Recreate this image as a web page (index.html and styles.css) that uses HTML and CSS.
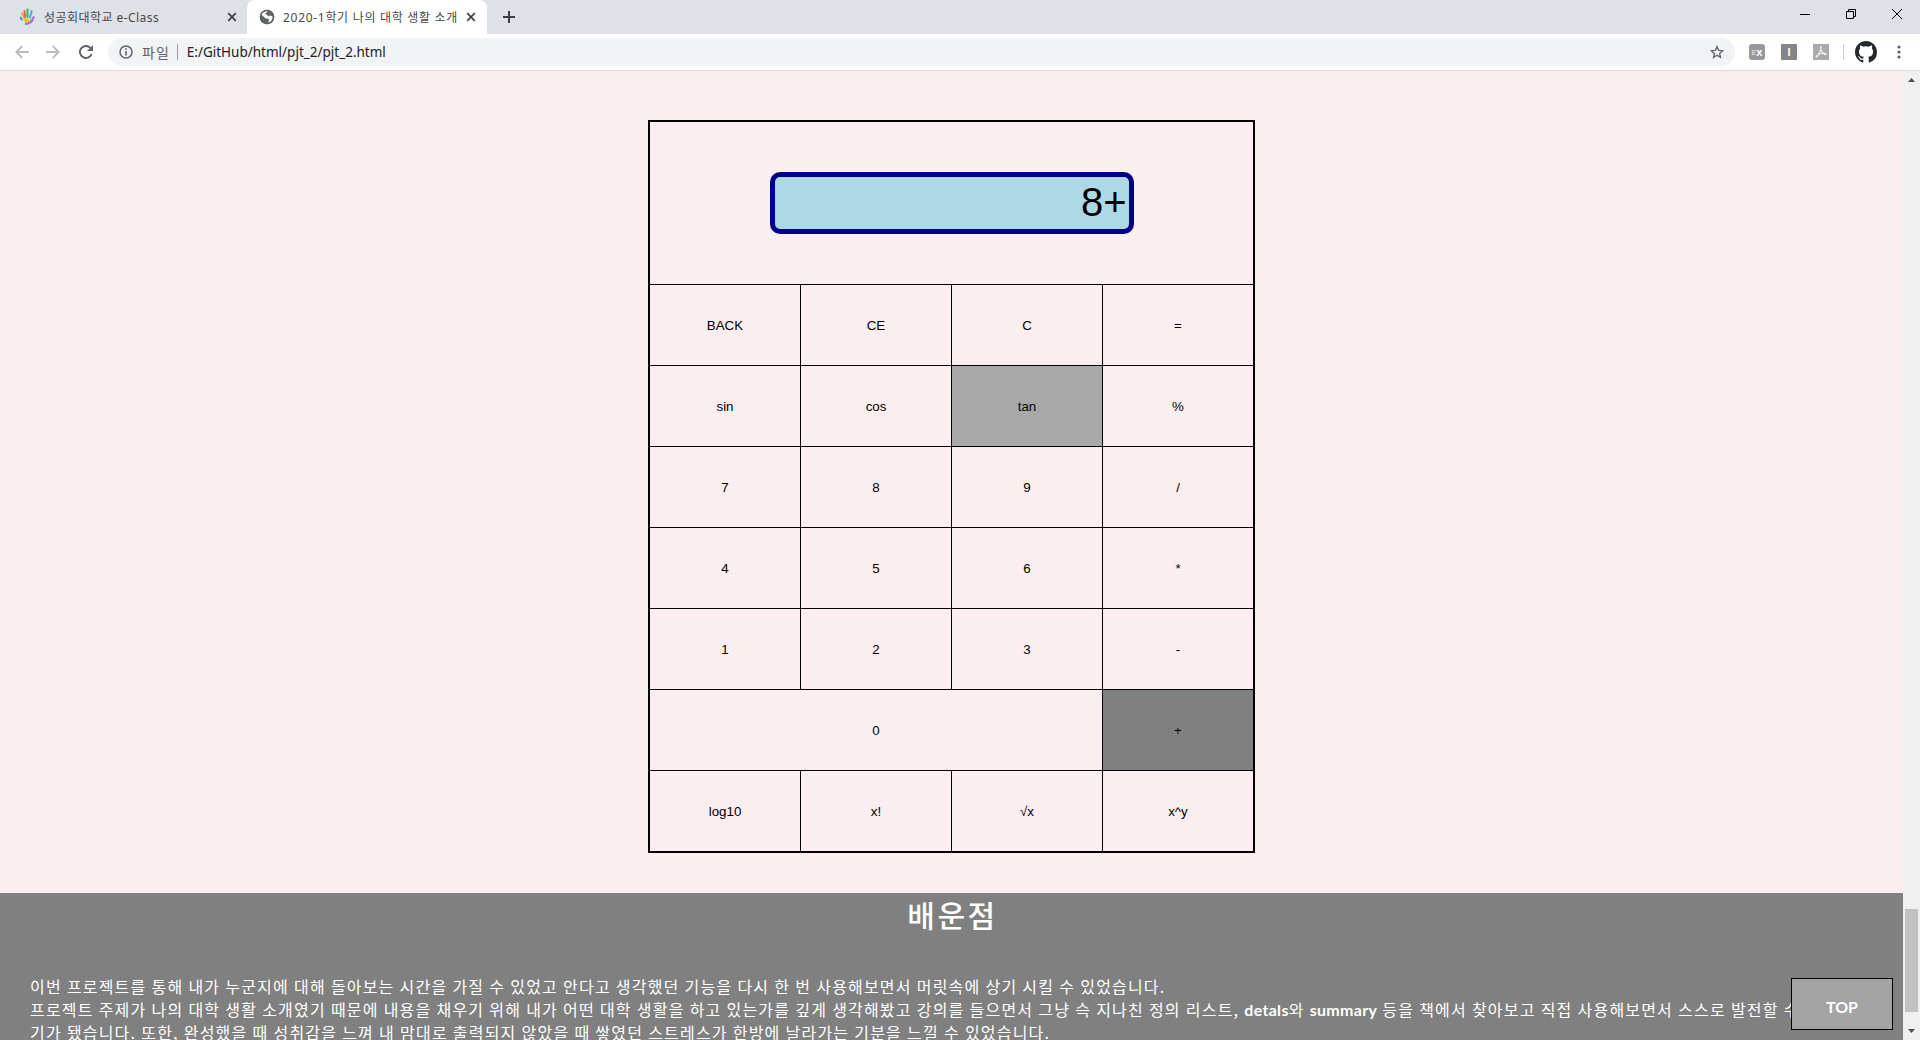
FILE: index.html
```html
<!DOCTYPE html>
<html lang="ko">
<head>
<meta charset="utf-8">
<title>2020-1학기 나의 대학 생활 소개</title>
<link rel="stylesheet" href="styles.css">
</head>
<body>
<div class="browser">
  <header class="tabbar">
    <div class="tab tab-idle">
      <svg class="favicon" width="16" height="18" viewBox="0 0 16 18" fill="none" stroke-linecap="round" stroke-width="2">
        <path d="M4.600 10 2.200 5.500" stroke="#f39a3c"/><path d="M1.800 11.500.8 9.600" stroke="#2b9fe0"/><path d="M5.300 9 4.400 3" stroke="#e2674c"/><path d="M7.500 9V1.600" stroke="#35b36b"/><path d="M10 9.500 11.600 3" stroke="#49a9ea"/>
        <path d="M6 12.500h1.500" stroke="#f5c400" stroke-width="4"/><path d="M13.500 9.500c-1.200 4-3.500 6-7.500 6.300" stroke="#9a7bd0" stroke-width="2.600"/>
      </svg>
      <span class="tab-title title-a">성공회대학교 e-Class</span>
      <svg class="close" width="10" height="10" viewBox="0 0 10 10"><path d="M1.200 1.200l7.600 7.600M8.800 1.200 1.200 8.800" stroke="#3c4043" stroke-width="1.700"/></svg>
    </div>
    <div class="tab tab-active">
      <svg class="favicon" width="16" height="16" viewBox="0 0 16 16"><circle cx="8" cy="8" r="7.200" fill="#5f6368"/><path d="M9.200 1.900c-1.500.4-1.200 1.700-2.300 2.200-1 .4-.5 1.500.5 1.500 1.200.1.700 1.500 2 1.700 1 .2 1-.9 2-.7l2.300.9c.2 3-1.600 5.500-4.500 6.300-.3-1.200.9-1.700.9-2.700 0-1.500-1.600-1.600-2.800-1.700-1 0-1.400-.7-2.200-1.500L2.300 5.800C3 3.500 5.700 1.400 9.200 1.900z" fill="#fff"/><circle cx="8" cy="8" r="6.600" fill="none" stroke="#5f6368" stroke-width="1.500"/></svg>
      <span class="tab-title title-b">2020-1학기 나의 대학 생활 소개</span>
      <svg class="close" width="10" height="10" viewBox="0 0 10 10"><path d="M1.200 1.200l7.600 7.600M8.800 1.200 1.200 8.800" stroke="#3c4043" stroke-width="1.700"/></svg>
    </div>
    <svg class="newtab" width="12" height="12" viewBox="0 0 12 12"><path d="M6 0v12M0 6h12" stroke="#3c4043" stroke-width="2"/></svg>
    <div class="window-buttons">
      <svg width="10" height="10" viewBox="0 0 10 10"><path d="M0 5.500h10" stroke="#000"/></svg>
      <svg width="10" height="10" viewBox="0 0 10 10" fill="none" stroke="#000"><path d="M.5 2.500h7v7h-7zM2.500 2.500v-2h7v7h-2"/></svg>
      <svg width="10" height="10" viewBox="0 0 10 10"><path d="M0 0l10 10M10 0 0 10" stroke="#000"/></svg>
    </div>
  </header>
  <div class="toolbar">
    <svg class="nav" width="14" height="14" viewBox="0 0 14 14" fill="none" stroke="#babcbe" stroke-width="1.800"><path d="M14 7H1.500M7.300 1 1.300 7l6 6"/></svg>
    <svg class="nav" width="14" height="14" viewBox="0 0 14 14" fill="none" stroke="#babcbe" stroke-width="1.800"><path d="M0 7h12.500M6.700 1l6 6-6 6"/></svg>
    <svg class="reload" width="14" height="14" viewBox="0 0 14 14"><path d="M12.600 9A6 6 0 1 1 11.500 3" fill="none" stroke="#5f6368" stroke-width="1.900"/><path d="M14 0v6H8z" fill="#5f6368"/></svg>
    <div class="omnibox">
      <svg width="14" height="14" viewBox="0 0 14 14"><circle cx="7" cy="7" r="6" fill="none" stroke="#5f6368" stroke-width="1.500"/><path d="M7 6v4.500M7 3.300v1.500" stroke="#5f6368" stroke-width="1.600"/></svg>
      <span class="scheme">파일</span><span class="divider"></span>
      <span class="url">E:/GitHub/html/pjt_2/pjt_2.html</span>
      <svg class="star" width="14" height="14" viewBox="0 0 14 14"><path d="M7 1.500l1.600 3.800 4.100.4-3.100 2.700.9 4L7 10.300l-3.500 2.100.9-4L1.300 5.700l4.100-.4z" fill="none" stroke="#5f6368" stroke-width="1.300"/></svg>
    </div>
    <div class="extensions">
      <span class="ext ext-ex"><i>E</i>x</span>
      <span class="ext ext-i">I</span>
      <svg class="ext-pdf" width="16" height="16" viewBox="0 0 16 16"><path d="M0 0h16v16H0z" fill="#ababab"/><path d="M7.500 2.500c1.700 0-.3 6.500-3.800 10.500-1.800 1 .3-2.500 4.300-3.500 3-.8 6-.1 5 .9S7.900 8.500 7.500 2.500z" fill="none" stroke="#eee" stroke-width="1.200"/></svg>
    </div>
    <span class="toolbar-rule"></span>
    <svg class="github" width="22" height="22" viewBox="0 0 16 16"><path fill="#24292e" d="M8 0C3.580 0 0 3.580 0 8c0 3.540 2.290 6.530 5.470 7.590.4.070.55-.17.55-.38 0-.19-.01-.82-.01-1.490-2.010.37-2.530-.49-2.690-.94-.09-.23-.48-.94-.82-1.130-.28-.15-.68-.52-.01-.53.63-.01 1.080.58 1.230.82.720 1.210 1.870.87 2.330.66.070-.52.280-.87.510-1.070-1.780-.2-3.640-.89-3.640-3.950 0-.87.310-1.590.82-2.150-.08-.2-.36-1.020.08-2.120 0 0 .67-.21 2.200.82a7.600 7.600 0 0 1 4 0c1.530-1.040 2.200-.82 2.200-.82.440 1.100.16 1.920.08 2.120.51.560.82 1.270.82 2.150 0 3.070-1.870 3.750-3.650 3.950.29.250.54.730.54 1.480 0 1.070-.01 1.930-.01 2.200 0 .21.150.46.55.38A8.010 8.010 0 0 0 16 8c0-4.420-3.580-8-8-8z"/></svg>
    <svg class="menu" width="4" height="14" viewBox="0 0 4 14" fill="#5f6368"><circle cx="2" cy="2" r="1.600"/><circle cx="2" cy="7" r="1.600"/><circle cx="2" cy="12" r="1.600"/></svg>
  </div>
  <div class="viewport">
    <main class="page">
      <section class="calc-section">
        <div class="calc">
          <div class="display-cell"><div class="display">8+</div></div>
          <div>BACK</div><div>CE</div><div>C</div><div>=</div>
          <div>sin</div><div>cos</div><div class="hovered">tan</div><div>%</div>
          <div>7</div><div>8</div><div>9</div><div>/</div>
          <div>4</div><div>5</div><div>6</div><div>*</div>
          <div>1</div><div>2</div><div>3</div><div>-</div>
          <div class="zero">0</div><div class="pressed">+</div>
          <div>log10</div><div>x!</div><div>√x</div><div>x^y</div>
        </div>
      </section>
      <section class="learned">
        <h2>배운점</h2>
        <p>이번 프로젝트를 통해 내가 누군지에 대해 돌아보는 시간을 가질 수 있었고 안다고 생각했던 기능을 다시 한 번 사용해보면서 머릿속에 상기 시킬 수 있었습니다.</p>
        <p>프로젝트 주제가 나의 대학 생활 소개였기 때문에 내용을 채우기 위해 내가 어떤 대학 생활을 하고 있는가를 깊게 생각해봤고 강의를 들으면서 그냥 슥 지나친 정의 리스트, <b>detals</b>와 <b>summary</b> 등을 책에서 찾아보고 직접 사용해보면서 스스로 발전할 수</p>
        <p>기가 됐습니다. 또한, 완성했을 때 성취감을 느껴 내 맘대로 출력되지 않았을 때 쌓였던 스트레스가 한방에 날라가는 기분을 느낄 수 있었습니다.</p>
      </section>
      <a class="top-button">TOP</a>
    </main>
    <div class="scrollbar">
      <svg width="7" height="4" viewBox="0 0 7 4"><path d="M0 4 3.500 0 7 4z" fill="#505050"/></svg>
      <span class="thumb"></span>
      <svg width="7" height="4" viewBox="0 0 7 4"><path d="M0 0l3.500 4L7 0z" fill="#505050"/></svg>
    </div>
  </div>
</div>
</body>
</html>
```

FILE: styles.css
```css
* { box-sizing: border-box; }
body { margin: 0; overflow: hidden; font-family: "Liberation Sans", "Noto Sans CJK KR", sans-serif; }
.browser { width: 1920px; height: 1040px; display: flex; flex-direction: column; overflow: hidden; }
svg { display: block; flex: none; }

.tabbar { height: 34px; flex: none; display: flex; align-items: center; background: #dee1e6; }
.tab { height: 34px; display: flex; align-items: center; color: #45494d; font: 12px "Noto Sans", "Noto Sans CJK KR", sans-serif; white-space: nowrap; }
.tab-idle { width: 247px; padding: 0 10px 0 20px; }
.tab-active { width: 240px; padding: 0 11px 0 12px; background: #fff; border-radius: 8px 8px 0 0; }
.favicon { margin-right: 8px; }
.close { margin-left: auto; }
.title-a { letter-spacing: 0.45px; }
.title-b { letter-spacing: 0.7px; }
.newtab { margin-left: 16px; }
.window-buttons { margin-left: auto; display: flex; gap: 36px; padding: 0 18px 6px 0; }

.toolbar { height: 37px; flex: none; display: flex; align-items: center; background: #fff; border-bottom: 1px solid #d9dbdf; padding-left: 15px; }
.nav { margin-right: 17px; }
.reload { margin: 0 13px 0 2px; }
.omnibox { width: 1627px; height: 28px; border-radius: 14px; background: #f1f3f4; display: flex; align-items: center; padding: 0 11px; margin-left: 2px; font: 14px "Noto Sans", "Noto Sans CJK KR", sans-serif; color: #202124; white-space: nowrap; }
.scheme { margin-left: 9px; color: #5f6368; letter-spacing: 1px; }
.url { font-size: 13.5px; }
.divider { width: 1px; height: 16px; background: #9aa0a6; margin: 0 9px 0 7px; }
.star { margin-left: auto; }
.extensions { display: flex; gap: 16px; margin-left: 14px; }
.ext { width: 16px; height: 16px; color: #fff; font: bold 11px/16px "Liberation Sans", sans-serif; text-align: center; }
.ext-ex { background: #999; border-radius: 3px; }
.ext-ex i { font: bold 7px "Liberation Sans", sans-serif; vertical-align: 1px; opacity: .6; }
.ext-i { background: #858585; border-radius: 1px; }
.toolbar-rule { width: 1px; height: 16px; background: #cfd1d4; margin: 0 11px 0 14px; }
.menu { margin-left: 20px; }

.viewport { flex: 1; display: flex; min-height: 0; }
.page { width: 1903px; position: relative; overflow: hidden; background: #fbeef0; }
.calc-section { height: 822px; padding-top: 49px; }
.calc { width: 607px; margin: 0 auto; border: 2px solid #000; background: #000; display: grid; grid-template-columns: repeat(4, 150px); grid-template-rows: 162px repeat(7, 80px); gap: 1px; font-size: 13.333px; color: #000; }
.calc > div { background: #fbeef0; display: flex; align-items: center; justify-content: center; }
.calc > .display-cell { grid-column: span 4; }
.display { width: 364px; height: 62px; border: 5px solid #00008b; border-radius: 10px; background: #add8e6; font-size: 40px; line-height: 50px; text-align: right; padding-right: 2px; }
.calc > .zero { grid-column: span 3; }
.calc > .hovered { background: #a9a9a9; }
.calc > .pressed { background: #808080; }

.learned { height: 147px; background: #808080; color: #fff; padding-left: 30px; font: 16px/23px "Noto Sans CJK KR", sans-serif; letter-spacing: 1.19px; word-spacing: -0.6px; overflow: hidden; }
.learned h2 { margin: -1px 28px 0 0; height: 83px; text-align: center; font: 500 30px/44px "Noto Sans CJK KR", sans-serif; letter-spacing: 2.6px; }
.learned p { margin: 0; height: 23px; white-space: nowrap; }
.learned b { font-family: Lato, sans-serif; letter-spacing: 0.3px; }
.top-button { position: absolute; right: 10px; bottom: 10px; width: 102px; height: 52px; border: 1px solid #000; background: #a4a4a4; color: #fff; font: bold 16px/56px Lato, sans-serif; text-align: center; }

.scrollbar { width: 17px; background: #f0f0f0; display: flex; flex-direction: column; align-items: center; justify-content: space-between; padding: 7px 0; }
.thumb { width: 13px; height: 103px; background: #c1c1c1; margin: auto 0 17px; }
```
